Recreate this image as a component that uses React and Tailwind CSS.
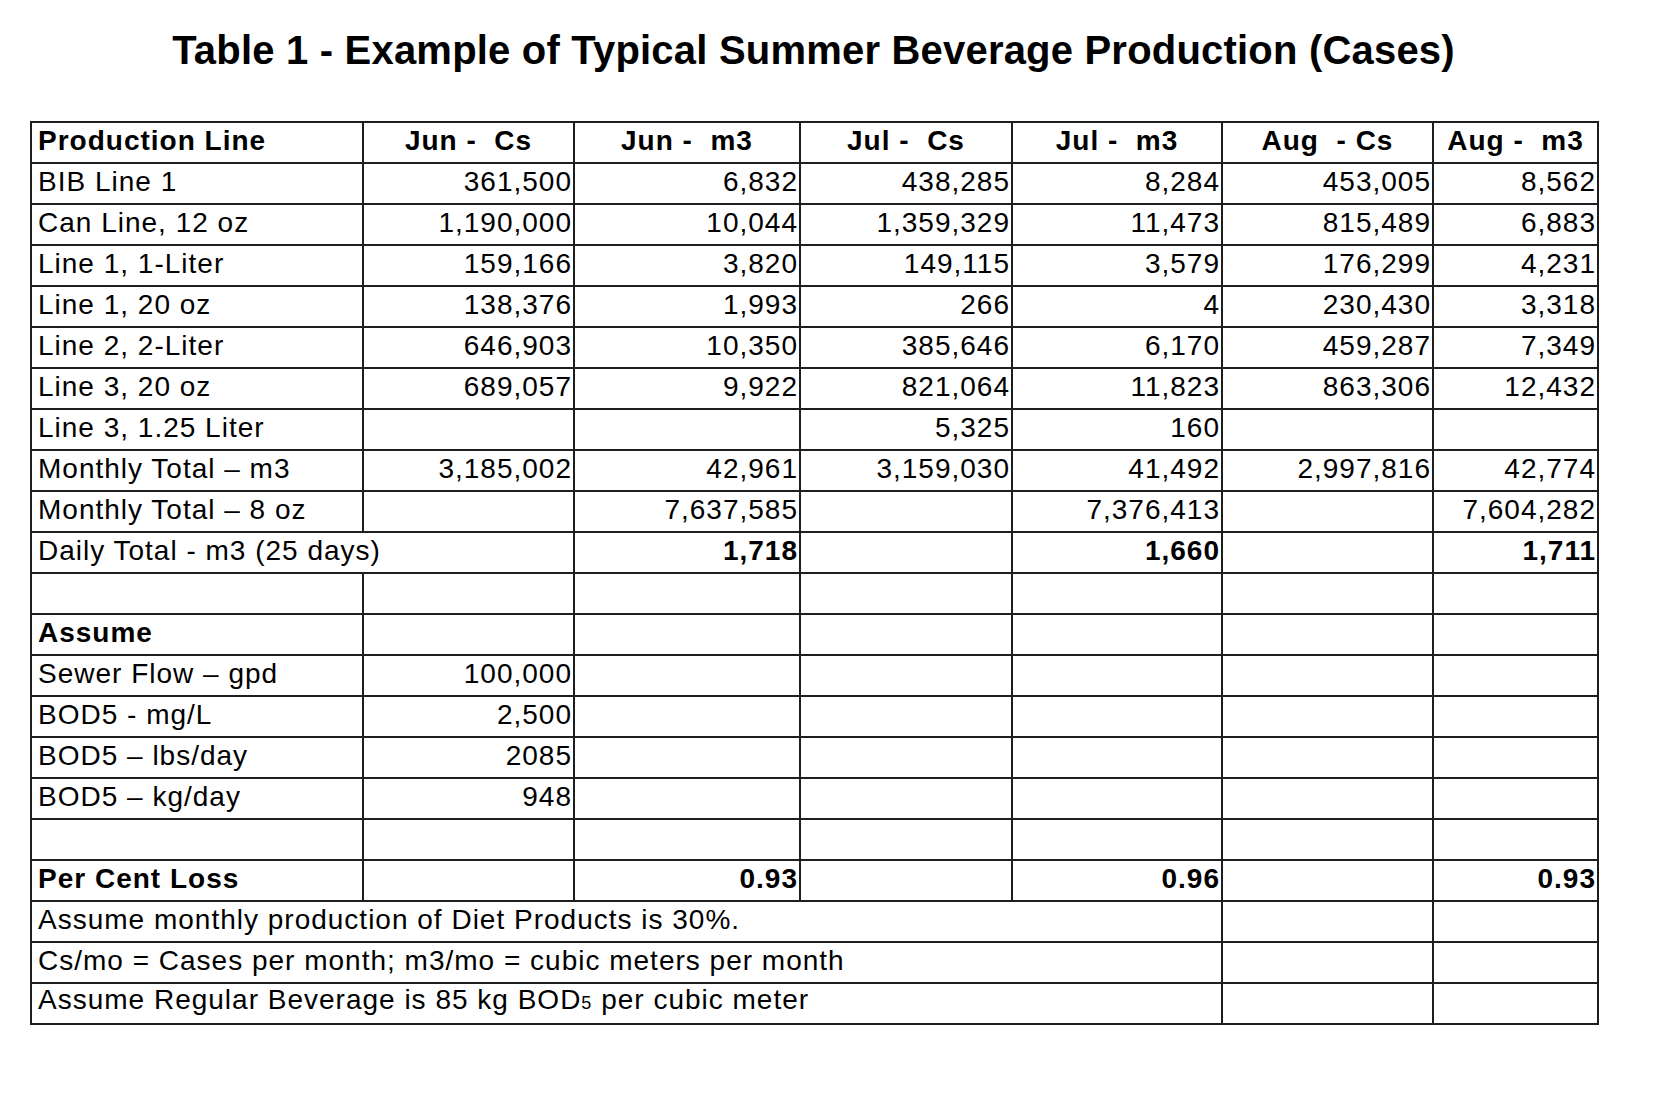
const rows = [
  { label: 'BIB Line 1', cells: ['361,500', '6,832', '438,285', '8,284', '453,005', '8,562'] },
  { label: 'Can Line, 12 oz', cells: ['1,190,000', '10,044', '1,359,329', '11,473', '815,489', '6,883'] },
  { label: 'Line 1, 1-Liter', cells: ['159,166', '3,820', '149,115', '3,579', '176,299', '4,231'] },
  { label: 'Line 1, 20 oz', cells: ['138,376', '1,993', '266', '4', '230,430', '3,318'] },
  { label: 'Line 2, 2-Liter', cells: ['646,903', '10,350', '385,646', '6,170', '459,287', '7,349'] },
  { label: 'Line 3, 20 oz', cells: ['689,057', '9,922', '821,064', '11,823', '863,306', '12,432'] },
  { label: 'Line 3, 1.25 Liter', cells: ['', '', '5,325', '160', '', ''] },
  { label: 'Monthly Total – m3', cells: ['3,185,002', '42,961', '3,159,030', '41,492', '2,997,816', '42,774'] },
  { label: 'Monthly Total – 8 oz', cells: ['', '7,637,585', '', '7,376,413', '', '7,604,282'] },
];

const assume = [
  { label: 'Sewer Flow – gpd', value: '100,000' },
  { label: 'BOD5 - mg/L', value: '2,500' },
  { label: 'BOD5 – lbs/day', value: '2085' },
  { label: 'BOD5 – kg/day', value: '948' },
];

const headers = ['Jun -  Cs', 'Jun -  m3', 'Jul -  Cs', 'Jul -  m3', 'Aug  - Cs', 'Aug -  m3'];

const td = 'border-2 border-[#1e1e1e] h-[41px] p-0 pb-[4px] align-middle';
const lbl = td + ' text-left pl-[6px]';
const num = td + ' text-right pr-[1px]';

function Blank({ n }) {
  return Array.from({ length: n }).map((_, i) => <td key={i} className={td}></td>);
}

export default function App() {
  return (
    <div className="bg-white min-h-[1096px] w-[1660px] text-black font-['Liberation_Sans',Arial,sans-serif]">
      <div className="pl-[30px] pt-[26px]">
        <h1 className="w-[1567px] text-center text-[40px] leading-[48px] font-bold tracking-[0.2px]">
          Table 1 - Example of Typical Summer Beverage Production (Cases)
        </h1>

        <table className="mt-[47px] w-[1567px] table-fixed border-collapse text-[28px] leading-[31px] tracking-[1px]">
          <colgroup>
            <col className="w-[332px]" />
            <col className="w-[211px]" />
            <col className="w-[226px]" />
            <col className="w-[212px]" />
            <col className="w-[210px]" />
            <col className="w-[211px]" />
            <col className="w-[165px]" />
          </colgroup>
          <tbody>
            <tr>
              <td className={lbl + ' font-bold'}>Production Line</td>
              {headers.map((h) => (
                <td key={h} className={td + ' text-center font-bold whitespace-pre'}>{h}</td>
              ))}
            </tr>

            {rows.map((r) => (
              <tr key={r.label}>
                <td className={lbl}>{r.label}</td>
                {r.cells.map((c, i) => (
                  <td key={i} className={num}>{c}</td>
                ))}
              </tr>
            ))}

            <tr>
              <td colSpan={2} className={lbl}>Daily Total - m3 (25 days)</td>
              <td className={num + ' font-bold'}>1,718</td>
              <td className={td}></td>
              <td className={num + ' font-bold'}>1,660</td>
              <td className={td}></td>
              <td className={num + ' font-bold'}>1,711</td>
            </tr>

            <tr>
              <Blank n={7} />
            </tr>

            <tr>
              <td className={lbl + ' font-bold'}>Assume</td>
              <Blank n={6} />
            </tr>

            {assume.map((a) => (
              <tr key={a.label}>
                <td className={lbl}>{a.label}</td>
                <td className={num}>{a.value}</td>
                <Blank n={5} />
              </tr>
            ))}

            <tr>
              <Blank n={7} />
            </tr>

            <tr>
              <td className={lbl + ' font-bold'}>Per Cent Loss</td>
              <td className={td}></td>
              <td className={num + ' font-bold'}>0.93</td>
              <td className={td}></td>
              <td className={num + ' font-bold'}>0.96</td>
              <td className={td}></td>
              <td className={num + ' font-bold'}>0.93</td>
            </tr>

            <tr>
              <td colSpan={5} className={lbl}>Assume monthly production of Diet Products is 30%.</td>
              <Blank n={2} />
            </tr>
            <tr>
              <td colSpan={5} className={lbl}>Cs/mo = Cases per month; m3/mo = cubic meters per month</td>
              <Blank n={2} />
            </tr>
            <tr>
              <td colSpan={5} className={lbl}>
                Assume Regular Beverage is 85 kg BOD<span className="text-[18px]">5</span> per cubic meter
              </td>
              <Blank n={2} />
            </tr>
          </tbody>
        </table>
      </div>
    </div>
  );
}
